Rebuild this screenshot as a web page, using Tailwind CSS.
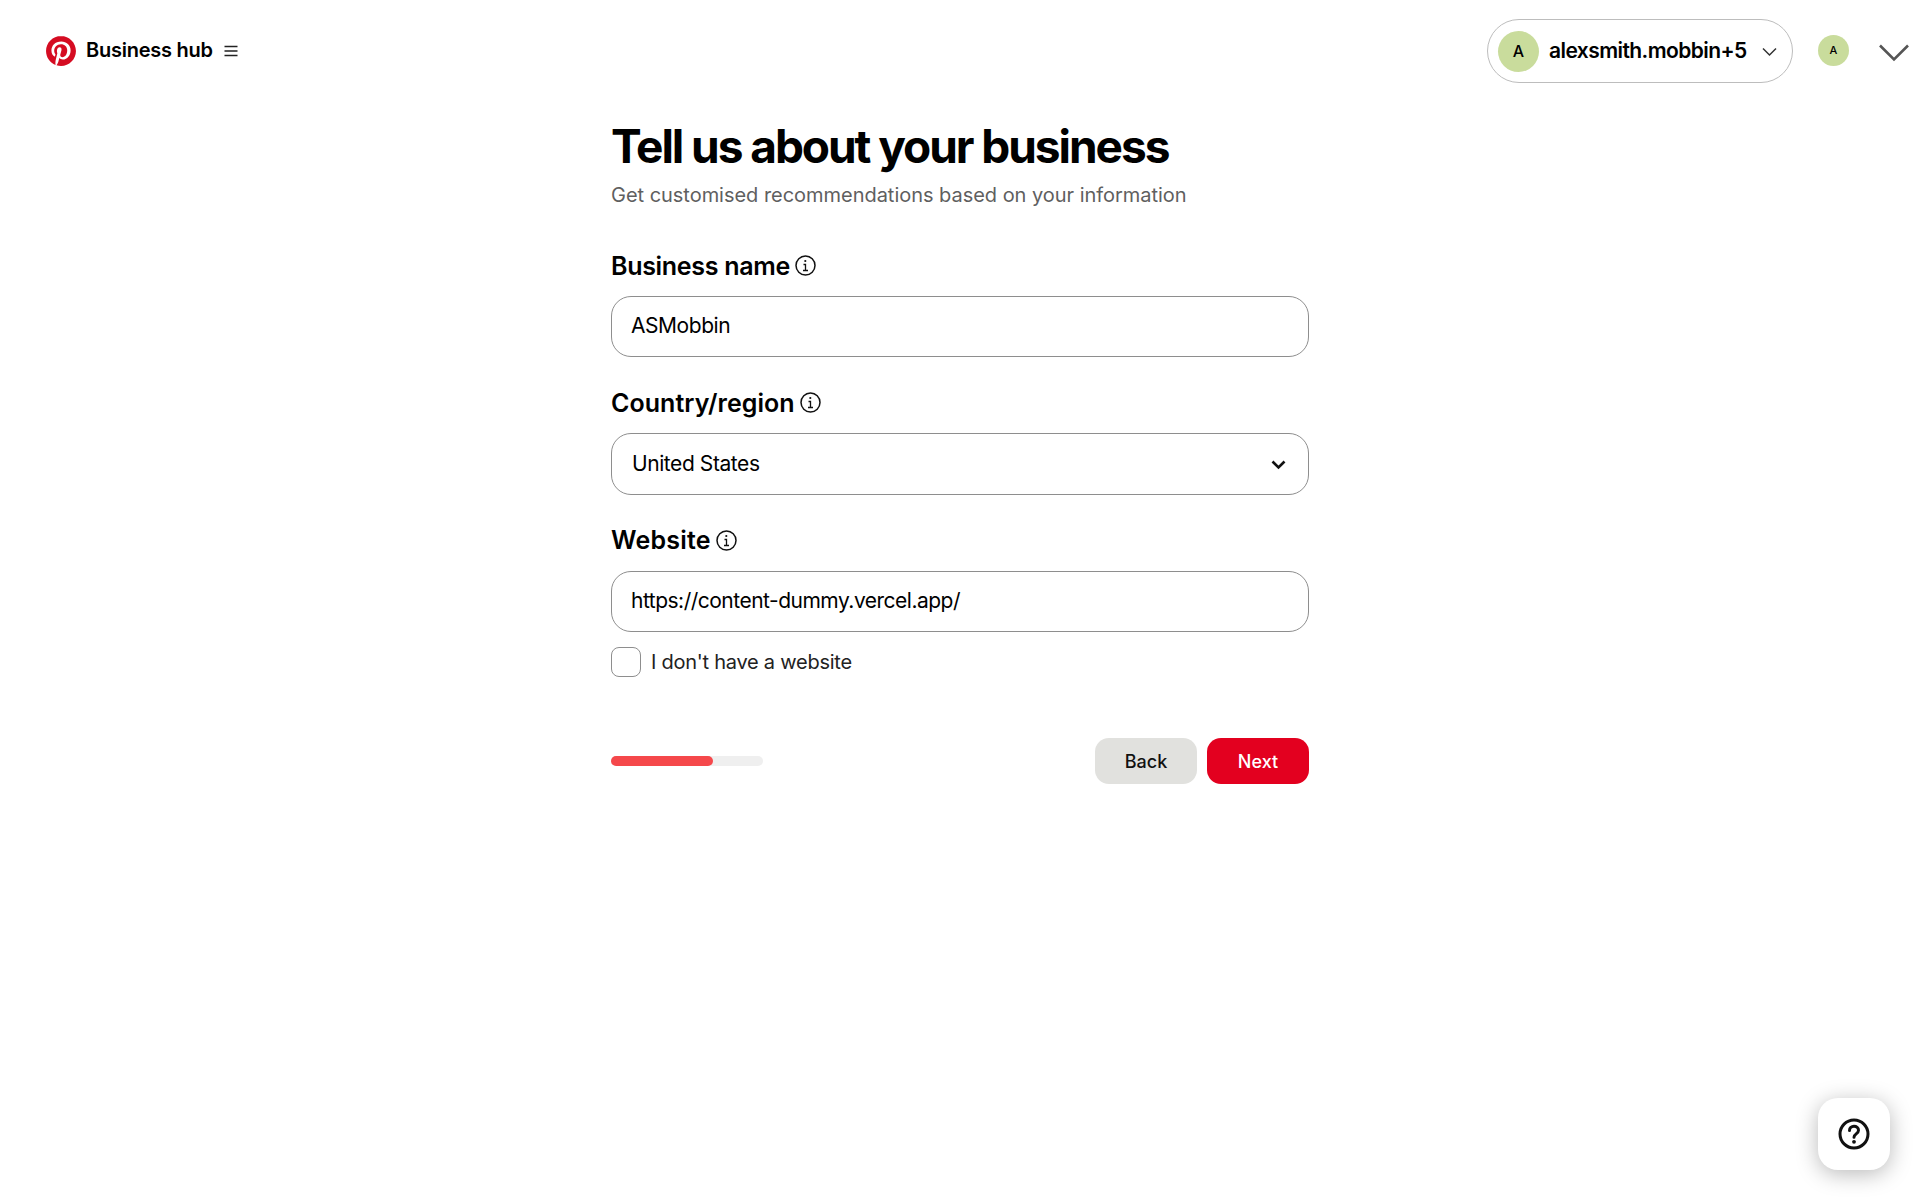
<!DOCTYPE html>
<html lang="en">
<head>
  <meta charset="UTF-8" />
  <meta name="viewport" content="width=device-width, initial-scale=1" />
  <title>Tell us about your business</title>
  <script src="https://cdn.jsdelivr.net/npm/@tailwindcss/browser@4"></script>
</head>
<body class="bg-white min-h-screen font-['Inter',sans-serif] text-black">

  <!-- Header -->
  <header class="h-[101px] flex items-center justify-between pl-[46px] pr-[11px]">
    <div class="flex items-center">
      <svg class="w-[30px] h-[30px] text-[#d50c22]" viewBox="0 0 24 24" fill="currentColor"><path d="M12.017 0C5.396 0 .029 5.367.029 11.987c0 5.079 3.158 9.417 7.618 11.162-.105-.949-.199-2.403.041-3.439.219-.937 1.406-5.957 1.406-5.957s-.359-.72-.359-1.781c0-1.663.967-2.911 2.168-2.911 1.024 0 1.518.769 1.518 1.688 0 1.029-.653 2.567-.992 3.992-.285 1.193.6 2.165 1.775 2.165 2.128 0 3.768-2.245 3.768-5.487 0-2.861-2.063-4.869-5.008-4.869-3.41 0-5.409 2.562-5.409 5.199 0 1.033.394 2.143.889 2.741.099.12.112.225.085.345-.09.375-.293 1.199-.334 1.363-.053.225-.172.271-.401.165-1.495-.69-2.433-2.878-2.433-4.646 0-3.776 2.748-7.252 7.92-7.252 4.158 0 7.392 2.967 7.392 6.923 0 4.135-2.607 7.462-6.233 7.462-1.214 0-2.354-.629-2.758-1.379l-.749 2.848c-.269 1.045-1.004 2.352-1.498 3.146 1.123.345 2.306.535 3.55.535 6.607 0 11.985-5.365 11.985-11.987C23.97 5.39 18.592.026 11.985.026L12.017 0z"/></svg>
      <span class="ml-[10px] mb-[1px] text-[20px] font-semibold tracking-[-0.25px]">Business hub</span>
      <svg class="ml-[11px] w-[14px] h-[12px]" viewBox="0 0 14 12" fill="none" stroke="#222" stroke-width="1.5"><path d="M0.5 1.5h13M0.5 6h13M0.5 10.5h13"/></svg>
    </div>
    <div class="flex items-center">
      <div class="w-[306px] h-[64px] mt-[1px] flex items-center pl-[10px] border border-[#bdbdbd] rounded-full">
        <div class="w-[41px] h-[41px] rounded-full bg-[#c9dc9c] flex items-center justify-center text-[16px] font-medium">A</div>
        <span class="ml-[10px] mb-[1px] text-[21px] font-semibold tracking-[-0.57px]">alexsmith.mobbin+5</span>
        <svg class="ml-[15px] mt-[2px] w-[15px] h-[10px]" viewBox="0 0 15 10" fill="none" stroke="#333" stroke-width="1.5"><path d="M1 1.5l6.5 6.5 6.5-6.5"/></svg>
      </div>
      <div class="ml-[25px] w-[31px] h-[31px] rounded-full bg-[#c9dc9c] flex items-center justify-center text-[11px] font-medium">A</div>
      <svg class="ml-[30px] mt-[5px] w-[30px] h-[18px]" viewBox="0 0 30 18" fill="none" stroke="#555" stroke-width="2.6"><path d="M1 1.5l14 14 14-14"/></svg>
    </div>
  </header>

  <!-- Form -->
  <main class="w-[698px] ml-[611px]">
    <h1 class="text-[46px] leading-[56px] font-bold tracking-[-2.05px] mt-[17px]">Tell us about your business</h1>
    <p class="mt-[7px] text-[20px] leading-[28px] tracking-[-0.03px] text-[#5f5f5f]">Get customised recommendations based on your information</p>

    <div class="mt-[43px]">
      <div class="flex items-center h-[30px] text-[25px] font-semibold tracking-[-0.3px]">
        Business name
        <svg class="ml-[5px] mb-[3px] w-[21px] h-[21px]" viewBox="0 0 21 21" fill="none" stroke="#111" stroke-width="1.5"><circle cx="10.5" cy="10.5" r="9.5"/><path d="M8.5 9.5h2v6M8 15.5h5" stroke-width="1.3"/><circle cx="10.3" cy="6" r="1.1" fill="#111" stroke="none"/></svg>
      </div>
      <div class="mt-[14px] h-[61px] flex items-center pl-[19px] pr-[20px] pb-[1px] border border-[#8e8e8e] rounded-[20px] text-[21px] tracking-[-0.45px]">ASMobbin</div>
    </div>

    <div class="mt-[32px]">
      <div class="flex items-center h-[30px] text-[25px] font-semibold tracking-[0.05px]">
        Country/region
        <svg class="ml-[5px] mb-[3px] w-[21px] h-[21px]" viewBox="0 0 21 21" fill="none" stroke="#111" stroke-width="1.5"><circle cx="10.5" cy="10.5" r="9.5"/><path d="M8.5 9.5h2v6M8 15.5h5" stroke-width="1.3"/><circle cx="10.3" cy="6" r="1.1" fill="#111" stroke="none"/></svg>
      </div>
      <div class="mt-[14px] h-[62px] flex items-center justify-between pl-[20px] pr-[22px] border border-[#8e8e8e] rounded-[20px] text-[21px] tracking-[-0.42px]">
        <span class="mb-[1px]">United States</span>
        <svg class="w-[15px] h-[10px] mt-[2px]" viewBox="0 0 15 10" fill="none" stroke="#111" stroke-width="2.6"><path d="M1.5 1.5l6 6 6-6"/></svg>
      </div>
    </div>

    <div class="mt-[31px]">
      <div class="flex items-center h-[30px] text-[25px] font-semibold tracking-[0.2px]">
        Website
        <svg class="ml-[5px] mb-[2px] w-[21px] h-[21px]" viewBox="0 0 21 21" fill="none" stroke="#111" stroke-width="1.5"><circle cx="10.5" cy="10.5" r="9.5"/><path d="M8.5 9.5h2v6M8 15.5h5" stroke-width="1.3"/><circle cx="10.3" cy="6" r="1.1" fill="#111" stroke="none"/></svg>
      </div>
      <div class="mt-[15px] h-[61px] flex items-center pl-[19px] pr-[20px] pb-[1px] border border-[#8e8e8e] rounded-[20px] text-[21px] tracking-[-0.5px]">https://content-dummy.vercel.app/</div>
    </div>

    <label class="mt-[15px] flex items-center">
      <span class="w-[30px] h-[30px] border border-[#8e8e8e] rounded-[8px]"></span>
      <span class="ml-[10px] text-[20px] tracking-[-0.25px] text-[#222]">I don't have a website</span>
    </label>

    <div class="mt-[61px] flex items-center justify-between">
      <div class="w-[152px] h-[10px] rounded-full bg-[#efefef]">
        <div class="w-[102px] h-[10px] rounded-full bg-[#f5484b]"></div>
      </div>
      <div class="flex gap-[10px]">
        <button class="w-[102px] h-[46px] rounded-[14px] bg-[#e1e1de] text-[18px] font-medium text-[#111]">Back</button>
        <button class="w-[102px] h-[46px] rounded-[14px] bg-[#e3001f] text-[18px] font-medium text-white">Next</button>
      </div>
    </div>
  </main>

  <!-- Help button -->
  <button class="fixed left-[1818px] top-[1098px] w-[72px] h-[72px] rounded-[20px] bg-white shadow-[0_4px_22px_rgba(0,0,0,0.28)] flex items-center justify-center">
    <svg class="w-[32px] h-[32px]" viewBox="0 0 32 32" fill="none" stroke="#111" stroke-width="3" stroke-linecap="round"><circle cx="16" cy="16" r="14"/><path d="M11.5 12.5c0-2.6 2-4.2 4.5-4.2s4.5 1.6 4.5 4c0 3.6-4.5 3.6-4.5 6.9"/><circle cx="16" cy="23.8" r="1.9" fill="#111" stroke="none"/></svg>
  </button>
</body>
</html>
